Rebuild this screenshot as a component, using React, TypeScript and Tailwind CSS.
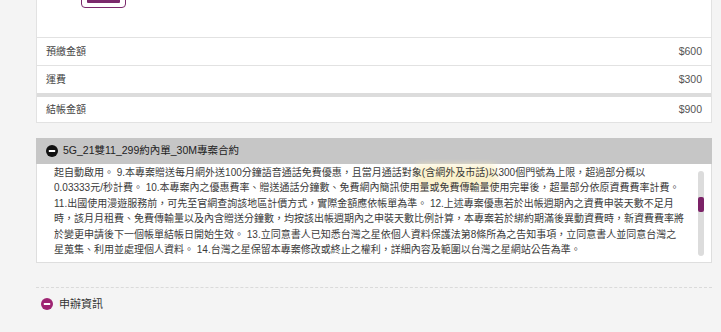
const FONT = { fontFamily: '"Liberation Sans", "Noto Sans CJK TC", sans-serif' };

const terms = [
  '起自動啟用。 9.本專案贈送每月網外送100分鐘語音通話免費優惠，且當月通話對象(含網外及市話)以300個門號為上限，超過部分概以',
  '0.03333元/秒計費。 10.本專案內之優惠費率、贈送通話分鐘數、免費網內簡訊使用量或免費傳輸量使用完畢後，超量部分依原資費費率計費。',
  '11.出國使用漫遊服務前，可先至官網查詢該地區計價方式，實際金額應依帳單為準。 12.上述專案優惠若於出帳週期內之資費申裝天數不足月',
  '時，該月月租費、免費傳輸量以及內含贈送分鐘數，均按該出帳週期內之申裝天數比例計算，本專案若於綁約期滿後異動資費時，新資費費率將',
  '於變更申請後下一個帳單結帳日開始生效。 13.立同意書人已知悉台灣之星依個人資料保護法第8條所為之告知事項，立同意書人並同意台灣之',
  '星蒐集、利用並處理個人資料。 14.台灣之星保留本專案修改或終止之權利，詳細內容及範圍以台灣之星網站公告為準。',
];

function MinusCircle({ color }: { color: string }) {
  return (
    <svg width="12" height="12" viewBox="0 0 12 12">
      <circle cx="6" cy="6" r="6" fill={color} />
      <rect x="2.8" y="5" width="6.4" height="2" rx="0.5" fill="#fff" />
    </svg>
  );
}

function AmountRow({ label, value }: { label: string; value: string }) {
  return (
    <div className="flex h-[27px] items-center justify-between px-[9px] text-[10px] text-[#444]">
      <span>{label}</span>
      <span className="text-[10.5px] text-[#555]">{value}</span>
    </div>
  );
}

export default function App() {
  return (
    <div className="h-[332px] w-[721px] overflow-hidden bg-[#f4f4f4]" style={FONT}>
      <div className="ml-[36px] mr-[9px]">
        {/* summary card */}
        <div className="flex flex-col border-x border-b border-[#e2e2e2] bg-white">
          <div className="flex h-[38px] flex-col border-b border-[#e2e2e2] pl-[44px]">
            <div className="-mt-[12px] flex h-[20px] w-[45px] items-end justify-center rounded-[4px] border border-[#7b2a6c] pb-[4px]">
              <div className="h-[6px] w-[33px] rounded-[1px] bg-[#7b2a6c]" />
            </div>
          </div>
          <div className="border-b border-[#e2e2e2]">
            <AmountRow label="預繳金額" value="$600" />
          </div>
          <AmountRow label="運費" value="$300" />
          <div className="h-[4px] bg-[#dcdcdc]" />
          <div className="flex h-[25px] items-center justify-between px-[9px] text-[10px] text-[#444]">
            <span>結帳金額</span>
            <span className="text-[10.5px] text-[#555]">$900</span>
          </div>
        </div>

        {/* contract panel */}
        <div className="mt-[15px]">
          <div className="flex h-[26px] items-center gap-[5px] bg-[#c6c6c6] pl-[10px] text-[10.5px] text-[#222]">
            <MinusCircle color="#111" />
            <span>5G_21雙11_299約內單_30M專案合約</span>
          </div>
          <div className="relative flex h-[99px] border-x border-b border-[#dedede] bg-white">
            <div className="pointer-events-none absolute left-[378px] top-[1px] h-[24px] w-[82px] rounded-[6px] bg-[#fbefc0] opacity-80 blur-[3px]" />
            <div className="relative flex-1 overflow-hidden pl-[17px] pt-[1px] text-[10px] leading-[15.4px] text-[#3a3a3a]">
              {terms.map((t, i) => (
                <div key={i} className="whitespace-nowrap">
                  {t}
                </div>
              ))}
            </div>
            <div className="mb-[6px] mr-[7px] mt-[7px] flex w-[6px] flex-col rounded-full bg-[#dcdcdc]">
              <div className="mt-[26px] h-[15px] w-[6px] rounded-[2px] bg-[#7b2267]" />
            </div>
          </div>
        </div>

        <div className="mt-[24px] border-t border-dashed border-[#dadada]" />

        <div className="mt-[8px] flex items-center gap-[6px] pl-[5px] text-[11px] text-[#333]">
          <MinusCircle color="#9e2472" />
          <span>申辦資訊</span>
        </div>
      </div>
    </div>
  );
}
